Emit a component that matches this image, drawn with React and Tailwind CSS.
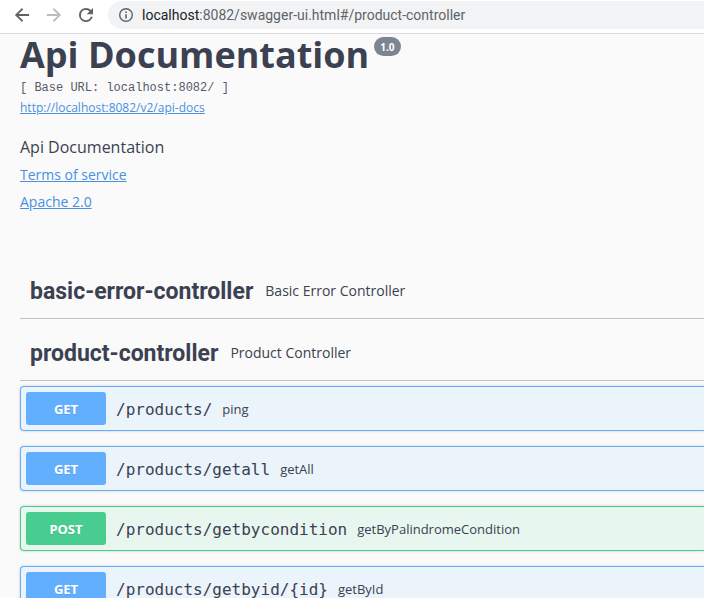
import { Fragment } from "react";

const sections = [
  { name: "basic-error-controller", description: "Basic Error Controller", operations: [] },
  {
    name: "product-controller",
    description: "Product Controller",
    operations: [
      { method: "GET", path: "/products/", summary: "ping" },
      { method: "GET", path: "/products/getall", summary: "getAll" },
      { method: "POST", path: "/products/getbycondition", summary: "getByPalindromeCondition" },
      { method: "GET", path: "/products/getbyid/{id}", summary: "getById" },
    ],
  },
];

const tones = {
  GET: { row: "border-[#61affe] bg-[#ebf3fb]", button: "bg-[#61affe]" },
  POST: { row: "border-[#49cc90] bg-[#e8f6f0]", button: "bg-[#49cc90]" },
};

function BrowserBar() {
  return (
    <header className="flex h-[34px] shrink-0 items-start border-b border-[#dadbdc] bg-white pt-px pl-3">
      <nav className="mr-3 flex h-7 items-center gap-3 text-[#5f6368]">
        <button type="button" aria-label="Back">
          <svg className="size-5" viewBox="0 0 24 24" fill="currentColor">
            <path d="M20.5 10.8H7.83l5.59-5.39L12 3.5 3.5 12l8.5 8.5 1.41-1.91L7.83 13.2H20.5v-2.4z" />
          </svg>
        </button>
        <button type="button" aria-label="Forward" className="text-[#babcbe]">
          <svg className="size-5" viewBox="0 0 24 24" fill="currentColor">
            <path d="M12 3.5l-1.41 1.91 5.58 5.39H3.5v2.4h12.67l-5.58 5.39L12 20.5l8.5-8.5z" />
          </svg>
        </button>
        <button type="button" aria-label="Reload">
          <svg className="size-5" viewBox="0 0 24 24" fill="currentColor">
            <path d="M17.9 6.1A8.4 8.4 0 0 0 12 3.6a8.4 8.4 0 1 0 8.1 10.6h-2.4A6.1 6.1 0 1 1 12 5.9c1.66 0 3.14.69 4.22 1.78L12.8 11h7.6V3.6l-2.5 2.5z" />
          </svg>
        </button>
      </nav>
      <div className="flex h-7 flex-1 items-center gap-2 rounded-l-full bg-[#f1f3f4] pl-2.5">
        <svg className="size-4 shrink-0 text-[#5f6368]" viewBox="0 0 16 16" fill="currentColor">
          <path d="M8 1a7 7 0 1 0 0 14A7 7 0 0 0 8 1zm0 12.6A5.6 5.6 0 1 1 8 2.4a5.6 5.6 0 0 1 0 11.2zM7.2 7.2h1.6v4.2H7.2zM7.2 4.5h1.6v1.6H7.2z" />
        </svg>
        <p className="font-['Roboto',sans-serif] text-sm whitespace-nowrap text-[#5f6368]">
          <span className="text-[#202124]">localhost</span>:8082/swagger-ui.html#/product-controller
        </p>
      </div>
    </header>
  );
}

function Operation({ method, path, summary }) {
  const tone = tones[method];
  return (
    <div className={`flex h-[45px] items-center rounded-l border-y border-l pl-[5px] shadow-[0_0_3px_rgba(0,0,0,0.19)] ${tone.row}`}>
      <button
        type="button"
        className={`h-[33px] w-20 shrink-0 rounded-[3px] pt-0.5 font-['Noto_Sans',sans-serif] text-[13px] font-bold text-white [text-shadow:0_1px_0_rgba(0,0,0,0.1)] ${tone.button}`}
      >
        {method}
      </button>
      <span className="px-2.5 pt-0.5 font-['DejaVu_Sans_Mono',monospace] text-base">{path}</span>
      <span className="pt-0.5 text-[13px]">{summary}</span>
    </div>
  );
}

export default function App() {
  return (
    <div className="flex h-screen flex-col overflow-hidden bg-[#fafafa] font-['Open_Sans',sans-serif] text-[#3b4151]">
      <BrowserBar />
      <main className="pl-5">
        <section className="flex flex-col items-start">
          <h1 className="flex items-start gap-[5px] text-4xl leading-[42px] font-bold">
            Api Documentation
            <small className="mt-[3px] flex h-[19px] items-center rounded-full bg-[#7d8492] px-1.5 text-[10px] leading-none font-bold text-white">
              1.0
            </small>
          </h1>
          <pre className="mt-0.5 font-['Liberation_Mono',monospace] text-xs leading-5 text-[#555a68]">[ Base URL: localhost:8082/ ]</pre>
          <a href="#docs" className="text-xs leading-5 text-[#4990e2] underline">http://localhost:8082/v2/api-docs</a>
          <p className="mt-[17px] text-base leading-6">Api Documentation</p>
          <a href="#terms" className="mt-1 text-sm leading-6 text-[#4990e2] underline">Terms of service</a>
          <a href="#license" className="mt-[3px] text-sm leading-6 text-[#4990e2] underline">Apache 2.0</a>
        </section>
        <div className="mt-[43px]">
          {sections.map((section) => (
            <Fragment key={section.name}>
              <div className="flex h-[62px] items-center gap-3 border-b border-[#3b4151]/30 pt-2 pl-2.5">
                <h2 className="pt-0.5 font-['Roboto',sans-serif] text-[23px] font-bold">{section.name}</h2>
                <p className="pb-0.5 text-sm">{section.description}</p>
              </div>
              {section.operations.length > 0 && (
                <div className="flex flex-col gap-[15px] pt-[5px]">
                  {section.operations.map((operation) => (
                    <Operation key={operation.path} {...operation} />
                  ))}
                </div>
              )}
            </Fragment>
          ))}
        </div>
      </main>
    </div>
  );
}
